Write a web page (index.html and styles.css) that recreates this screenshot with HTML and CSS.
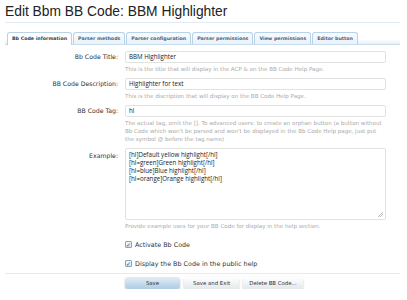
FILE: index.html
```html
<!DOCTYPE html>
<html>
<head>
<meta charset="utf-8">
<link rel="stylesheet" href="styles.css">
</head>
<body>
<div class="page">
  <h1 class="title">Edit Bbm BB Code: BBM Highlighter</h1>
  <div class="tabbar">
    <ul class="tabs">
      <li class="tab active">Bb Code information</li>
      <li class="tab">Parser methods</li>
      <li class="tab">Parser configuration</li>
      <li class="tab">Parser permissions</li>
      <li class="tab">View permissions</li>
      <li class="tab">Editor button</li>
    </ul>
  </div>
  <div class="form">
    <div class="row">
      <label class="label">Bb Code Title:</label>
      <div class="field">
        <div class="input">BBM Highlighter</div>
        <p class="hint">This is the title that will display in the ACP &amp; on the BB Code Help Page.</p>
      </div>
    </div>
    <div class="row">
      <label class="label">BB Code Description:</label>
      <div class="field">
        <div class="input">Highlighter for text</div>
        <p class="hint">This is the discription that will display on the BB Code Help Page.</p>
      </div>
    </div>
    <div class="row">
      <label class="label">BB Code Tag:</label>
      <div class="field">
        <div class="input">hl</div>
        <p class="hint">The actual tag, omit the []. To advanced users: to create an orphan button (a button without Bb Code which won't be parsed and won't be displayed in the Bb Code Help page, just put the symbol @ before the tag name)</p>
      </div>
    </div>
    <div class="row">
      <label class="label lbl-area">Example:</label>
      <div class="field">
        <div class="textarea">
          <div>[hl]Default yellow highlight[/hl]</div>
          <div>[hl=green]Green highlight[/hl]</div>
          <div>[hl=blue]Blue highlight[/hl]</div>
          <div>[hl=orange]Orange highlight[/hl]</div>
          <span class="grip"></span>
        </div>
        <p class="hint">Provide example uses for your BB Code for display in the help section.</p>
      </div>
    </div>
    <div class="row check-row">
      <span></span>
      <div class="check"><span class="box">&#10003;</span>Activate Bb Code</div>
    </div>
    <div class="row check-row">
      <span></span>
      <div class="check"><span class="box">&#10003;</span>Display the Bb Code in the public help</div>
    </div>
  </div>
  <div class="submit">
    <span></span>
    <div class="buttons">
      <span class="btn primary">Save</span>
      <span class="btn">Save and Exit</span>
      <span class="btn">Delete BB Code...</span>
    </div>
  </div>
</div>
</body>
</html>
```
FILE: styles.css
```css
* { box-sizing: border-box; }
body {
  margin: 0;
  background: #fff;
  font-family: "DejaVu Sans", Verdana, sans-serif;
  color: #333;
}
.page {
  padding: 0 7px 0 5px;
}
.title {
  margin: 0;
  padding: 4px 0 2px;
  font-family: "Liberation Sans", Arial, sans-serif;
  font-weight: normal;
  font-size: 13.8px;
  line-height: 16px;
  color: #222;
  border-bottom: 1px solid #e3ecf4;
}
.tabbar {
  margin-top: 9px;
  padding-left: 2px;
  border-bottom: 1px solid #c9dcec;
  background: linear-gradient(to bottom, #fff 0, #fff 60%, #e6eff8 100%);
}
.tabs {
  list-style: none;
  margin: 0;
  padding: 0;
  display: flex;
  gap: 1px;
}
.tab {
  height: 12px;
  padding: 0 4px;
  font-size: 4.75px;
  line-height: 11px;
  font-weight: bold;
  color: #4a6580;
  background: linear-gradient(to bottom, #f7fbfe, #e9f2fa);
  border: 1px solid #b8d2e8;
  border-bottom: none;
  border-radius: 3px 3px 0 0;
  margin-bottom: -1px;
}
.tab.active {
  background: #fff;
  color: #2b3f55;
  height: 13px;
}
.form {
  margin-top: 6px;
}
.row {
  display: grid;
  grid-template-columns: 113px 261px;
  column-gap: 7px;
  margin-bottom: 5px;
}
.label {
  text-align: right;
  font-size: 6.2px;
  line-height: 12px;
  color: #333;
}
.input {
  height: 12px;
  border: 1px solid #e2e2e2;
  border-radius: 2px;
  padding: 0 3px;
  font-family: "Open Sans", "Liberation Sans", sans-serif;
  font-size: 6.2px;
  line-height: 10px;
  color: #222;
  background: #fff;
}
.hint {
  margin: 2px 0 0;
  font-size: 5.55px;
  line-height: 8px;
  color: #aaa;
}
.lbl-area {
  padding-top: 2px;
}
.textarea {
  position: relative;
  height: 72px;
  border: 1px solid #e2e2e2;
  border-radius: 2px;
  padding: 2px 3px;
  font-family: "Open Sans", "Liberation Sans", sans-serif;
  font-size: 6.2px;
  line-height: 8px;
  color: #222;
}
.grip {
  position: absolute;
  right: 2px;
  bottom: 2px;
  width: 5px;
  height: 5px;
  background: linear-gradient(135deg, transparent 45%, #bbb 45%, #bbb 55%, transparent 55%, transparent 70%, #bbb 70%, #bbb 80%, transparent 80%);
}
.check-row {
  margin-bottom: 0;
  height: 19px;
  align-items: center;
}
.check {
  display: flex;
  align-items: center;
  font-size: 6.4px;
  line-height: 10px;
  color: #333;
}
.box {
  width: 7px;
  height: 7px;
  border: 1px solid #8ba2bb;
  border-radius: 1px;
  background: linear-gradient(to bottom, #f4f8fb, #d9e4ee);
  font-size: 6px;
  line-height: 5px;
  text-align: center;
  color: #2f4f7a;
  margin-right: 3px;
}
.submit {
  display: grid;
  grid-template-columns: 113px 261px;
  column-gap: 7px;
  margin-top: 0;
  border-top: 1px solid #e3ecf4;
  padding-top: 3px;
}
.buttons {
  display: flex;
  gap: 4px;
}
.btn {
  width: 55px;
  height: 12px;
  border-radius: 3px;
  text-align: center;
  font-size: 5.4px;
  line-height: 12px;
  color: #333;
  background: linear-gradient(to bottom, #ffffff, #e4e8ec);
  box-shadow: 0 1px 2px rgba(0,0,0,0.25);
}
.btn.primary {
  background: linear-gradient(to bottom, #e2eef8, #aecbe4);
}
.btn:last-child {
  width: 60px;
}
```
